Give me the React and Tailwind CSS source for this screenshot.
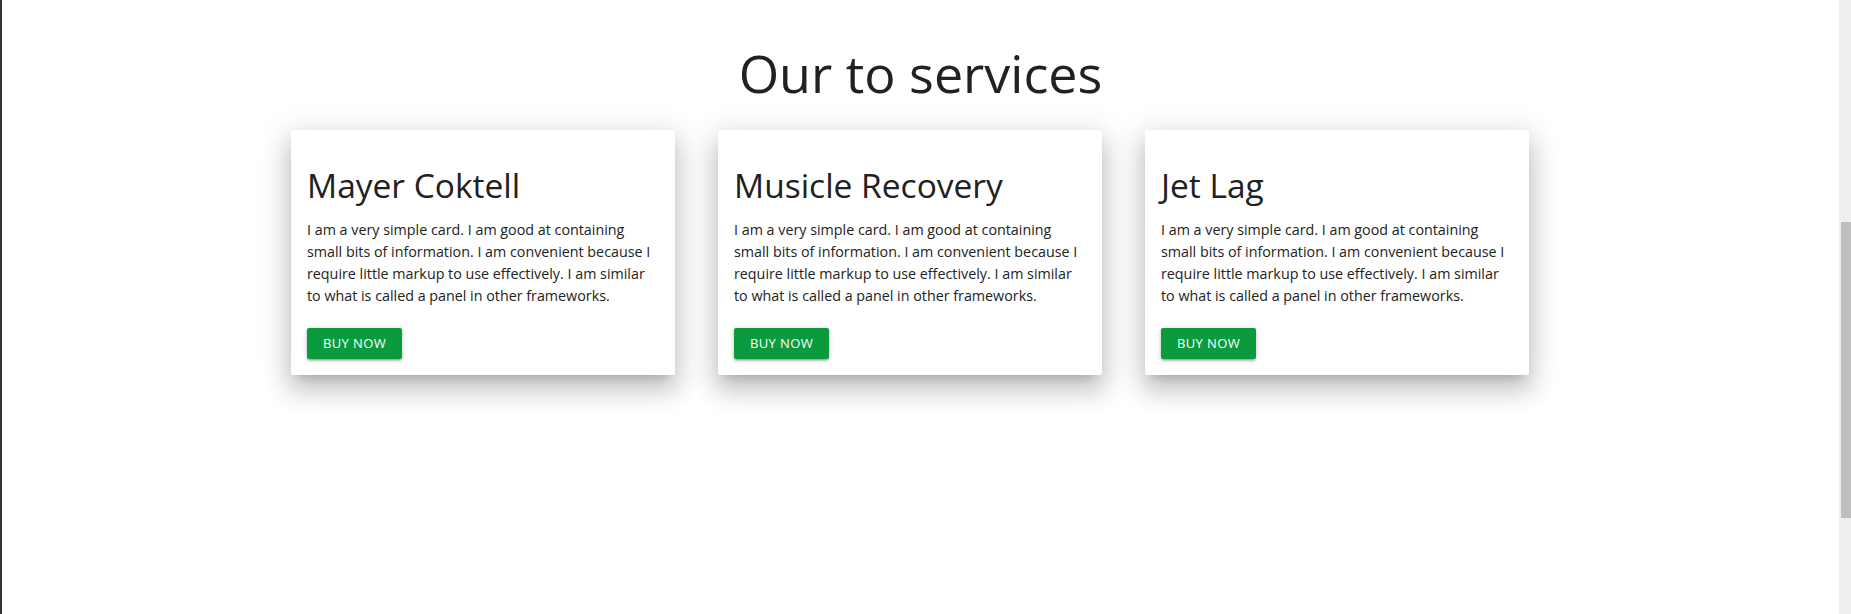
import React from 'react';

const services = [
  { id: 1, title: 'Mayer Coktell' },
  { id: 2, title: 'Musicle Recovery' },
  { id: 3, title: 'Jet Lag' },
];

const blurb =
  'I am a very simple card. I am good at containing small bits of information. I am convenient because I require little markup to use effectively. I am similar to what is called a panel in other frameworks.';

const ServiceCard = ({ title }) => (
  <div className="w-[384px] h-[245px] bg-white rounded-[2px] shadow-[0_16px_24px_2px_rgba(0,0,0,0.14),0_6px_30px_5px_rgba(0,0,0,0.12),0_8px_10px_-7px_rgba(0,0,0,0.2)] px-[16px] pt-[35px]">
    <h4 className="text-[33.5px] leading-[40px] text-[#212121]">{title}</h4>
    <p className="mt-[14px] text-[14.3px] leading-[22px] text-[#222]">{blurb}</p>
    <button className="mt-[21px] w-[95px] h-[31px] bg-[#0a9b3f] text-white text-[13px] tracking-[0.4px] uppercase rounded-[2px] shadow-[0_2px_2px_0_rgba(0,0,0,0.14),0_3px_1px_-2px_rgba(0,0,0,0.12),0_1px_5px_0_rgba(0,0,0,0.2)]">
      Buy now
    </button>
  </div>
);

export default function App() {
  return (
    <div className="flex h-[614px] w-full overflow-hidden font-['Open_Sans',sans-serif]">
      <div className="w-[2px] bg-[#3d3035]" />
      <main className="flex-1 bg-white">
        <h2 className="text-center text-[52px] leading-[64px] pt-[41px] text-[#212121]">Our to services</h2>
        <div className="flex gap-[43px] ml-[289px] mt-[25px]">
          {services.map((s) => (
            <ServiceCard key={s.id} title={s.title} />
          ))}
        </div>
      </main>
      <div className="w-[12px] bg-[#efefef] pt-[222px] pl-[2px]">
        <div className="h-[296px] bg-[#bfbfbf]" />
      </div>
    </div>
  );
}
